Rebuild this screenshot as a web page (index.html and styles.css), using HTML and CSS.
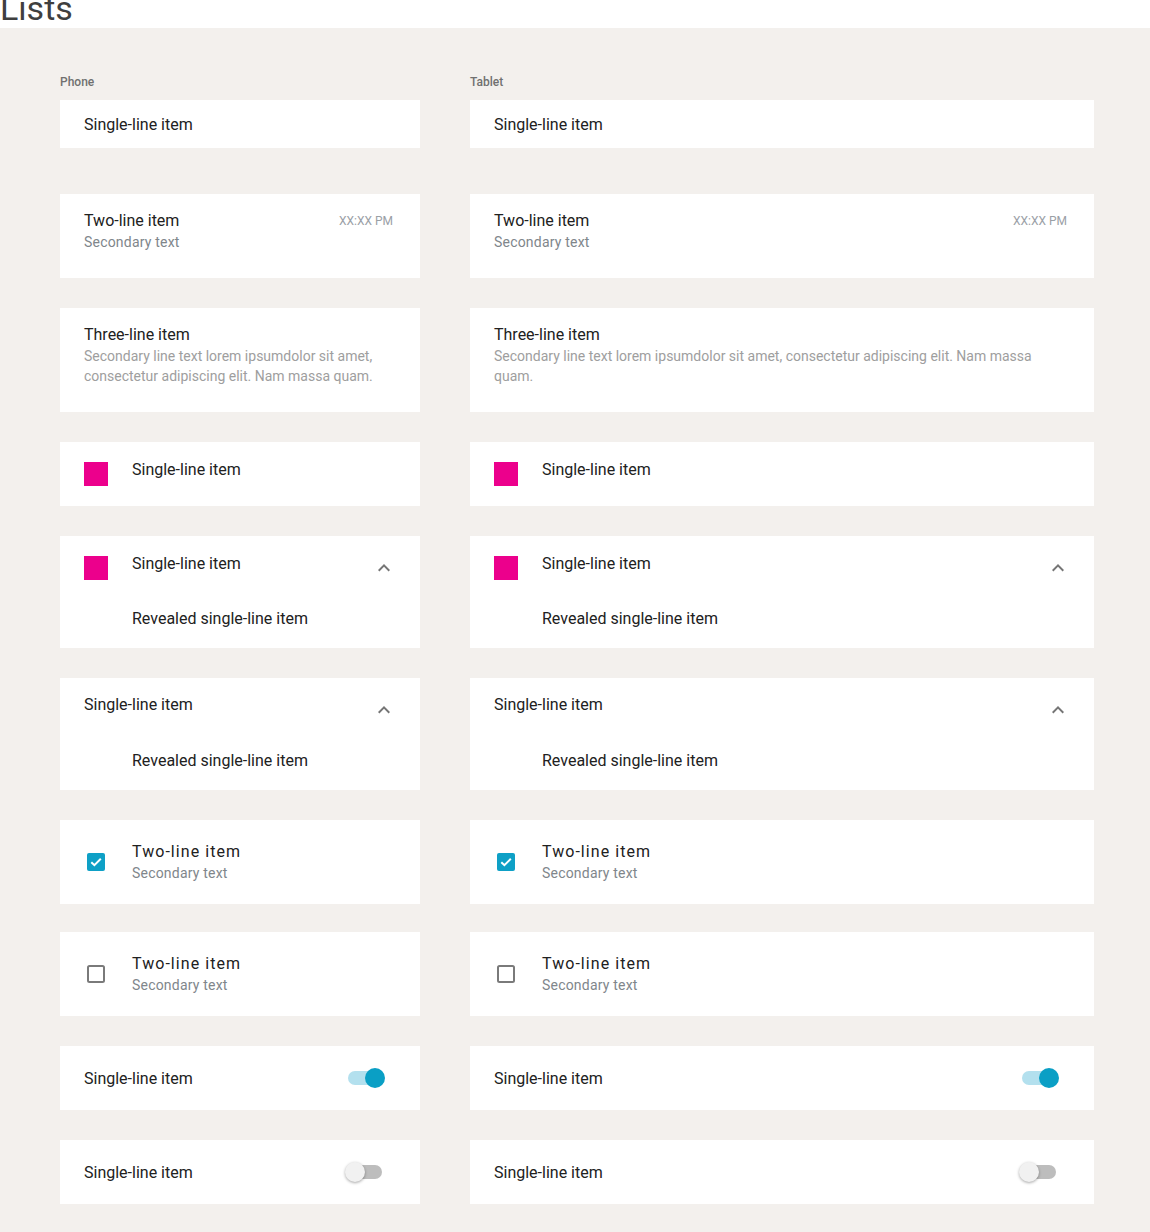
FILE: index.html
```html
<!DOCTYPE html>
<html lang="en">
<head>
<meta charset="utf-8">
<title>Lists</title>
<link rel="stylesheet" href="styles.css">
</head>
<body>
<header class="header"><h1 class="page-title">Lists</h1></header>
<main class="columns">
  <section class="column">
    <h2 class="col-label">Phone</h2>
    <div class="list">
      <div class="item item-single item-first"><span class="primary">Single-line item</span></div>

      <div class="item item-two">
        <div class="text"><div class="primary">Two-line item</div><div class="secondary">Secondary text</div></div>
        <div class="meta">XX:XX PM</div>
      </div>

      <div class="item item-three">
        <div class="primary">Three-line item</div>
        <div class="secondary light">Secondary line text lorem ipsumdolor sit amet, consectetur adipiscing elit. Nam massa quam.</div>
      </div>

      <div class="item item-avatar">
        <span class="swatch"></span><span class="primary shift">Single-line item</span>
      </div>

      <div class="item item-expand">
        <div class="row">
          <span class="swatch"></span><span class="primary shift grow">Single-line item</span>
          <svg class="chev" viewBox="0 0 24 24"><path d="M12 8l-6 6 1.41 1.41L12 10.83l4.59 4.58L18 14z"/></svg>
        </div>
        <div class="primary revealed">Revealed single-line item</div>
      </div>

      <div class="item item-expand">
        <div class="row">
          <span class="primary shift-small grow">Single-line item</span>
          <svg class="chev" viewBox="0 0 24 24"><path d="M12 8l-6 6 1.41 1.41L12 10.83l4.59 4.58L18 14z"/></svg>
        </div>
        <div class="primary revealed">Revealed single-line item</div>
      </div>

      <div class="item item-check">
        <svg class="checkbox" viewBox="0 0 24 24"><rect x="3" y="3" width="18" height="18" rx="2" fill="#0ea0c6"/><polyline points="7.3,12.2 10.4,15.2 16.8,8.8" fill="none" stroke="#fff" stroke-width="2"/></svg>
        <div class="text"><div class="primary spaced">Two-line item</div><div class="secondary">Secondary text</div></div>
      </div>

      <div class="item item-check item-tight">
        <svg class="checkbox" viewBox="0 0 24 24"><rect x="4" y="4" width="16" height="16" rx="1.5" fill="none" stroke="#7a7a7a" stroke-width="2"/></svg>
        <div class="text"><div class="primary spaced">Two-line item</div><div class="secondary">Secondary text</div></div>
      </div>

      <div class="item item-toggle">
        <span class="primary grow">Single-line item</span>
        <span class="toggle on"><span class="track"></span><span class="thumb"></span></span>
      </div>

      <div class="item item-toggle">
        <span class="primary grow">Single-line item</span>
        <span class="toggle off"><span class="track"></span><span class="thumb"></span></span>
      </div>
    </div>
  </section>

  <section class="column">
    <h2 class="col-label">Tablet</h2>
    <div class="list">
      <div class="item item-single item-first"><span class="primary">Single-line item</span></div>

      <div class="item item-two">
        <div class="text"><div class="primary">Two-line item</div><div class="secondary">Secondary text</div></div>
        <div class="meta">XX:XX PM</div>
      </div>

      <div class="item item-three">
        <div class="primary">Three-line item</div>
        <div class="secondary light">Secondary line text lorem ipsumdolor sit amet, consectetur adipiscing elit. Nam massa quam.</div>
      </div>

      <div class="item item-avatar">
        <span class="swatch"></span><span class="primary shift">Single-line item</span>
      </div>

      <div class="item item-expand">
        <div class="row">
          <span class="swatch"></span><span class="primary shift grow">Single-line item</span>
          <svg class="chev" viewBox="0 0 24 24"><path d="M12 8l-6 6 1.41 1.41L12 10.83l4.59 4.58L18 14z"/></svg>
        </div>
        <div class="primary revealed">Revealed single-line item</div>
      </div>

      <div class="item item-expand">
        <div class="row">
          <span class="primary shift-small grow">Single-line item</span>
          <svg class="chev" viewBox="0 0 24 24"><path d="M12 8l-6 6 1.41 1.41L12 10.83l4.59 4.58L18 14z"/></svg>
        </div>
        <div class="primary revealed">Revealed single-line item</div>
      </div>

      <div class="item item-check">
        <svg class="checkbox" viewBox="0 0 24 24"><rect x="3" y="3" width="18" height="18" rx="2" fill="#0ea0c6"/><polyline points="7.3,12.2 10.4,15.2 16.8,8.8" fill="none" stroke="#fff" stroke-width="2"/></svg>
        <div class="text"><div class="primary spaced">Two-line item</div><div class="secondary">Secondary text</div></div>
      </div>

      <div class="item item-check item-tight">
        <svg class="checkbox" viewBox="0 0 24 24"><rect x="4" y="4" width="16" height="16" rx="1.5" fill="none" stroke="#7a7a7a" stroke-width="2"/></svg>
        <div class="text"><div class="primary spaced">Two-line item</div><div class="secondary">Secondary text</div></div>
      </div>

      <div class="item item-toggle">
        <span class="primary grow">Single-line item</span>
        <span class="toggle on"><span class="track"></span><span class="thumb"></span></span>
      </div>

      <div class="item item-toggle">
        <span class="primary grow">Single-line item</span>
        <span class="toggle off"><span class="track"></span><span class="thumb"></span></span>
      </div>
    </div>
  </section>
</main>
</body>
</html>
```

FILE: styles.css
```css
* { box-sizing: border-box; }

body {
  margin: 0;
  font-family: Roboto, "Liberation Sans", sans-serif;
  background: #f3f0ed;
  color: #212121;
}

.header {
  height: 28px;
  background: #ffffff;
  overflow: hidden;
}

.page-title {
  margin: -9px 0 0 0;
  font-size: 34px;
  line-height: 34px;
  font-weight: 400;
  color: #3f3f3f;
}

.columns {
  display: grid;
  grid-template-columns: 360px 624px;
  column-gap: 50px;
  padding: 46px 0 28px 60px;
}

.column {
  display: flex;
  flex-direction: column;
}

.col-label {
  margin: 0 0 10px;
  font-size: 12px;
  line-height: 16px;
  font-weight: 500;
  color: #707070;
}

.list {
  display: flex;
  flex-direction: column;
  gap: 30px;
}

.item {
  background: #ffffff;
  padding: 0 24px;
}

.item-first { margin-bottom: 16px; }
.item-tight { margin-top: -2px; }

.primary {
  font-size: 16px;
  line-height: 24px;
  color: #212121;
}

.secondary {
  font-size: 14px;
  line-height: 20px;
  margin-top: -1px;
  color: #80868b;
  letter-spacing: 0.2px;
}

.secondary.light { color: #9e9e9e; letter-spacing: 0; }

.grow { flex: 1; }

.item-single {
  height: 48px;
  padding-top: 2px;
  display: flex;
  align-items: center;
}

.item-two {
  height: 84px;
  padding-top: 15px;
  display: flex;
  justify-content: space-between;
  align-items: flex-start;
}

.meta {
  font-size: 12px;
  line-height: 24px;
  color: #9aa0a6;
  margin-right: 3px;
}

.item-three {
  height: 104px;
  padding-top: 15px;
}

.swatch {
  width: 24px;
  height: 24px;
  background: #ec008c;
  margin-right: 24px;
  flex: none;
}

.item-avatar {
  height: 64px;
  padding-top: 20px;
  display: flex;
  align-items: flex-start;
}

.shift { margin-top: -4px; }
.shift-small { margin-top: -5px; }

.item-expand {
  height: 112px;
  padding-top: 20px;
}

.row {
  display: flex;
  align-items: flex-start;
}

.chev {
  width: 24px;
  height: 24px;
  fill: #757575;
  flex: none;
}

.revealed {
  margin-top: 27px;
  padding-left: 48px;
}

.item-check {
  height: 84px;
  padding-top: 20px;
  display: flex;
  align-items: flex-start;
}

.checkbox {
  width: 24px;
  height: 24px;
  margin-top: 10px;
  margin-right: 24px;
  flex: none;
}

.spaced { letter-spacing: 1.05px; }

.item-toggle {
  height: 64px;
  display: flex;
  align-items: center;
}

.item-toggle .primary { margin-top: 2px; }

.toggle {
  position: relative;
  width: 40px;
  height: 20px;
  margin-right: 11px;
  flex: none;
}

.track {
  position: absolute;
  left: 3px;
  right: 3px;
  top: 3px;
  height: 14px;
  border-radius: 7px;
}

.thumb {
  position: absolute;
  top: 0;
  width: 20px;
  height: 20px;
  border-radius: 50%;
}

.toggle.on .track { background: #b3e0ee; }
.toggle.on .thumb { right: 0; background: #0a9fc5; }

.toggle.off .track { background: #bdbdbd; }
.toggle.off .thumb {
  left: 0;
  background: #f1f1f1;
  box-shadow: 0 1px 3px rgba(0, 0, 0, 0.35);
}
```
